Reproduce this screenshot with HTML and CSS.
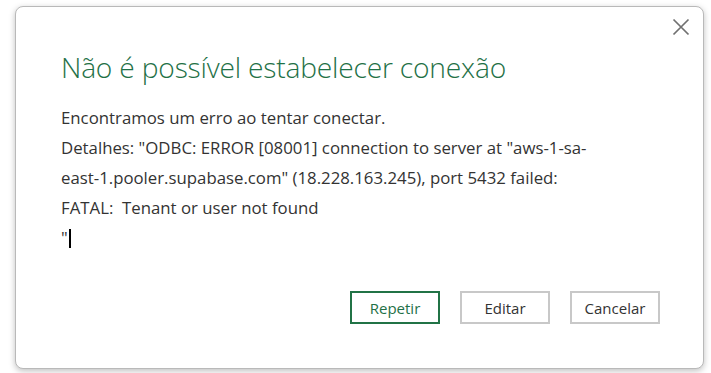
FILE: index.html
```html
<!DOCTYPE html>
<html lang="pt">
<head>
  <meta charset="UTF-8">
  <title>Erro de conexão</title>
  <link rel="stylesheet" href="styles.css">
</head>
<body>
  <div class="sheet">
    <div class="dialog">
      <button class="close-btn" aria-label="Fechar">
        <svg width="18" height="18" viewBox="0 0 18 18">
          <path d="M1.5 1.5 L16.5 16.5 M16.5 1.5 L1.5 16.5" stroke="#707070" stroke-width="1.7" fill="none"/>
        </svg>
      </button>

      <h1>Não é possível estabelecer conexão</h1>

      <div class="message">
        <p>Encontramos um erro ao tentar conectar.</p>
        <p>Detalhes: "ODBC: ERROR [08001] connection to server at "aws-1-sa-<br>east-1.pooler.supabase.com" (18.228.163.245), port 5432 failed:<br>FATAL:&nbsp; Tenant or user not found</p>
        <p>"<span class="caret"></span></p>
      </div>

      <div class="action-buttons">
        <button class="retry-btn">Repetir</button>
        <button class="plain-btn">Editar</button>
        <button class="plain-btn">Cancelar</button>
      </div>
    </div>
  </div>
</body>
</html>
```

FILE: styles.css
```css
* {
  box-sizing: border-box;
  margin: 0;
  padding: 0;
}

body {
  font-family: "Open Sans", "Noto Sans", sans-serif;
  background: #fff;
  overflow: hidden;
}

.sheet {
  width: 711px;
  height: 373px;
  padding: 6px 7px 4px 15px;
  background-color: #fff;
  background-image:
    linear-gradient(to right, transparent 110px, #e1e1e1 110px, #e1e1e1 111px, transparent 111px),
    linear-gradient(to bottom, transparent 35px, #e1e1e1 35px, #e1e1e1 36px, transparent 36px);
  background-size: 96px 100%, 100% 30px;
  background-position: 1px 0, 0 1px;
}

.dialog {
  position: relative;
  height: 363px;
  background: #fff;
  border: 1px solid #b9b9b9;
  border-radius: 8px;
  box-shadow: 0 2px 6px rgba(0, 0, 0, 0.25);
  padding: 40px 43px 0 45px;
}

.close-btn {
  position: absolute;
  top: 7px;
  right: 9px;
  width: 26px;
  height: 26px;
  border: none;
  background: none;
  display: flex;
  align-items: center;
  justify-content: center;
  cursor: pointer;
}

h1 {
  font-size: 28.2px;
  font-weight: 300;
  color: #1f7147;
  line-height: 40px;
  margin-bottom: 16px;
  letter-spacing: -0.2px;
}

.message {
  font-size: 16.8px;
  line-height: 30px;
  color: #333;
  white-space: nowrap;
}

.caret {
  display: inline-block;
  width: 2px;
  height: 19px;
  background: #000;
  vertical-align: -4px;
  margin-left: 1px;
}

.action-buttons {
  display: flex;
  justify-content: flex-end;
  gap: 20px;
  margin-top: 38px;
}

.action-buttons button {
  width: 90px;
  height: 33px;
  background: #fff;
  font-family: inherit;
  font-size: 15px;
  color: #333;
  cursor: pointer;
}

.retry-btn {
  border: 2px solid #217346;
  color: #1f7147 !important;
}

.plain-btn {
  border: 2px solid #c8c8c8;
}
```
